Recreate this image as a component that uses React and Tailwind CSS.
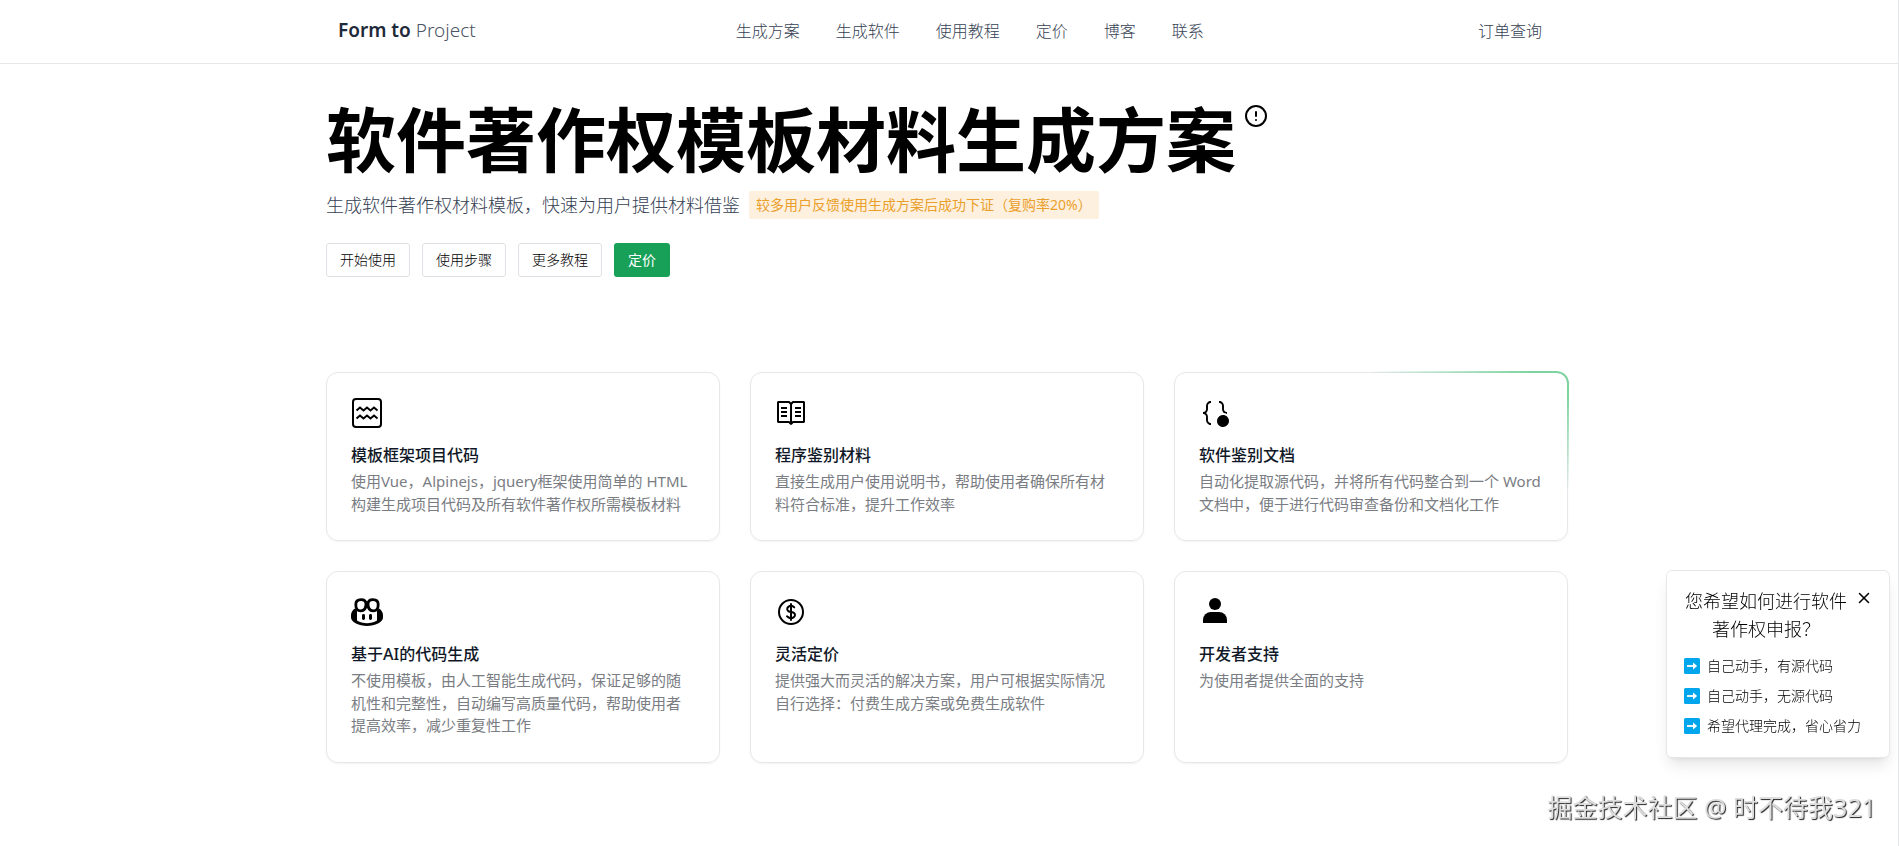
import React from 'react';
import { CircleAlert, X } from 'lucide-react';
import { VscBook, VscBracketDot } from 'react-icons/vsc';
import { HiOutlineCurrencyDollar } from 'react-icons/hi2';

const WaveIcon = ({ className }) => (
  <svg viewBox="0 0 32 32" fill="none" stroke="currentColor" strokeWidth="2" className={className}>
    <rect x="2" y="2" width="28" height="28" rx="3" />
    <path d="M5.5 13.5 9 10.5l3.5 3 3.5-3 3.5 3 3.5-3 3.5 3M5.5 21.5l3.5-3 3.5 3 3.5-3 3.5 3 3.5-3 3.5 3" />
  </svg>
);

const CopilotIcon = ({ className }) => (
  <svg viewBox="0 0 32 32" fill="currentColor" className={className}>
    <path
      fillRule="evenodd"
      d="M4 12.5C1.5 14 0 16.500 0 19v2.500C0 26 8 30 16 30s16-4 16-8.500V19c0-2.500-1.500-5-4-6.500l-2 2V24.500c-3 1.800-6.500 2.800-10 2.800S9 26.300 6 24.500V14.500z"
    />
    <path
      fill="none"
      stroke="currentColor"
      strokeWidth="2.800"
      d="M4.800 8.500C4.800 5 6.500 3.600 10 3.600c3.500 0 5 1.400 5 4.400 0 4.500-1.500 6.800-5.200 6.800-3.500 0-5-1.500-5-6.300zM27.200 8.500C27.200 5 25.500 3.600 22 3.600c-3.500 0-5 1.400-5 4.400 0 4.500 1.500 6.800 5.200 6.800 3.500 0 5-1.500 5-6.300z"
    />
    <rect x="11" y="18" width="3" height="6" rx="1.400" />
    <rect x="18" y="18" width="3" height="6" rx="1.400" />
  </svg>
);

const PersonIcon = ({ className }) => (
  <svg viewBox="0 0 32 32" fill="currentColor" className={className}>
    <circle cx="16" cy="8" r="6" />
    <path d="M4 27v-3a8 8 0 0 1 8-8h8a8 8 0 0 1 8 8v3z" />
  </svg>
);

const navLinks = ['生成方案', '生成软件', '使用教程', '定价', '博客', '联系'];

const actions = ['开始使用', '使用步骤', '更多教程'];

const features = [
  {
    icon: WaveIcon,
    title: '模板框架项目代码',
    text: '使用Vue，Alpinejs，jquery框架使用简单的 HTML 构建生成项目代码及所有软件著作权所需模板材料',
  },
  {
    icon: VscBook,
    title: '程序鉴别材料',
    text: '直接生成用户使用说明书，帮助使用者确保所有材料符合标准，提升工作效率',
  },
  {
    icon: VscBracketDot,
    title: '软件鉴别文档',
    text: '自动化提取源代码，并将所有代码整合到一个 Word 文档中，便于进行代码审查备份和文档化工作',
    glow: true,
  },
  {
    icon: CopilotIcon,
    title: '基于AI的代码生成',
    text: '不使用模板，由人工智能生成代码，保证足够的随机性和完整性，自动编写高质量代码，帮助使用者提高效率，减少重复性工作',
  },
  {
    icon: HiOutlineCurrencyDollar,
    title: '灵活定价',
    text: '提供强大而灵活的解决方案，用户可根据实际情况自行选择：付费生成方案或免费生成软件',
  },
  {
    icon: PersonIcon,
    title: '开发者支持',
    text: '为使用者提供全面的支持',
  },
];

const options = ['自己动手，有源代码', '自己动手，无源代码', '希望代理完成，省心省力'];

const Header = () => (
  <header className="border-b border-gray-200 pr-1">
    <div className="mx-auto flex h-[63px] max-w-[1242px] items-center justify-between pb-0.5">
      <a href="#" className="px-3 text-[19px] text-gray-600">
        <span className="font-semibold text-gray-800">Form to</span> Project
      </a>
      <nav className="flex gap-9 text-base text-gray-700">
        {navLinks.map((label) => (
          <a key={label} href="#">{label}</a>
        ))}
      </nav>
      <a href="#" className="px-[26px] text-base text-gray-700">订单查询</a>
    </div>
  </header>
);

const FeatureCard = ({ icon: Icon, title, text, glow }) => (
  <article className="relative rounded-xl border border-gray-200 px-6 pt-6 pb-[25px] shadow-xs">
    {glow && (
      <span className="pointer-events-none absolute -inset-0.5 rounded-xl border-2 border-[#7fd3a0] [mask-image:radial-gradient(200px_120px_at_top_right,black_20%,transparent)]" />
    )}
    <Icon className="size-8 text-black" />
    <h3 className="mt-3.5 text-base font-medium text-gray-900">{title}</h3>
    <p className="mt-[3px] text-[15px] leading-normal font-normal text-[#7a7d83]">{text}</p>
  </article>
);

const ChoicePopup = () => (
  <aside className="fixed right-[9px] bottom-[88px] w-[224px] rounded-md border border-gray-200 bg-white px-[17px] py-4 shadow-lg">
    <button type="button" aria-label="关闭" className="absolute top-[18px] right-4 text-black">
      <X className="size-[18px]" strokeWidth={2} />
    </button>
    <h2 className="mr-6 text-center text-lg text-black">您希望如何进行软件著作权申报？</h2>
    <ul className="mt-2 text-sm text-black">
      {options.map((label) => (
        <li key={label}>
          <a href="#" className="flex h-[30px] items-center gap-[7px] whitespace-nowrap">
            <svg viewBox="0 0 16 16" className="size-4 shrink-0">
              <rect width="16" height="16" rx="1.500" fill="#00a6ed" />
              <path d="M3 8h8" stroke="#fff" strokeWidth="1.800" />
              <path d="M9 4.600 13.200 8 9 11.400z" fill="#fff" />
            </svg>
            {label}
          </a>
        </li>
      ))}
    </ul>
  </aside>
);

export default function App() {
  return (
    <div className="min-h-screen border-r border-gray-200 bg-white font-['Noto_Sans','Noto_Sans_CJK_SC',sans-serif] font-light">
      <Header />
      <main className="pr-1">
        <div className="mx-auto max-w-[1242px] pt-10 pb-10">
          <div className="flex items-start gap-2">
            <h1 className="text-[70px] leading-[72px] font-bold text-black">软件著作权模板材料生成方案</h1>
            <button type="button" aria-label="说明">
              <CircleAlert className="size-6" />
            </button>
          </div>
          <div className="mt-[15px] flex items-center gap-[9px]">
            <p className="text-lg text-gray-700">生成软件著作权材料模板，快速为用户提供材料借鉴</p>
            <span className="flex h-7 items-center rounded-xs bg-[#fdf0de] px-[7px] text-sm font-normal text-[#eb9f2b]">
              较多用户反馈使用生成方案后成功下证（复购率20%）
            </span>
          </div>
          <div className="mt-6 flex gap-3 text-sm">
            {actions.map((label) => (
              <button key={label} type="button" className="h-[34px] rounded-[3px] border border-[#e0e0e6] px-[13px] text-black">
                {label}
              </button>
            ))}
            <button type="button" className="h-[34px] rounded-[3px] bg-[#18a058] px-3.5 font-normal text-white">定价</button>
          </div>
          <section className="mt-[95px] grid grid-cols-3 gap-[30px]">
            {features.map((feature) => (
              <FeatureCard key={feature.title} {...feature} />
            ))}
          </section>
        </div>
      </main>
      <ChoicePopup />
      <p className="fixed right-[23px] bottom-[21px] text-[25px] leading-9 font-normal text-[#dedede] [text-shadow:1px_1px_1px_#222]">
        掘金技术社区 @ 时不待我321
      </p>
    </div>
  );
}
